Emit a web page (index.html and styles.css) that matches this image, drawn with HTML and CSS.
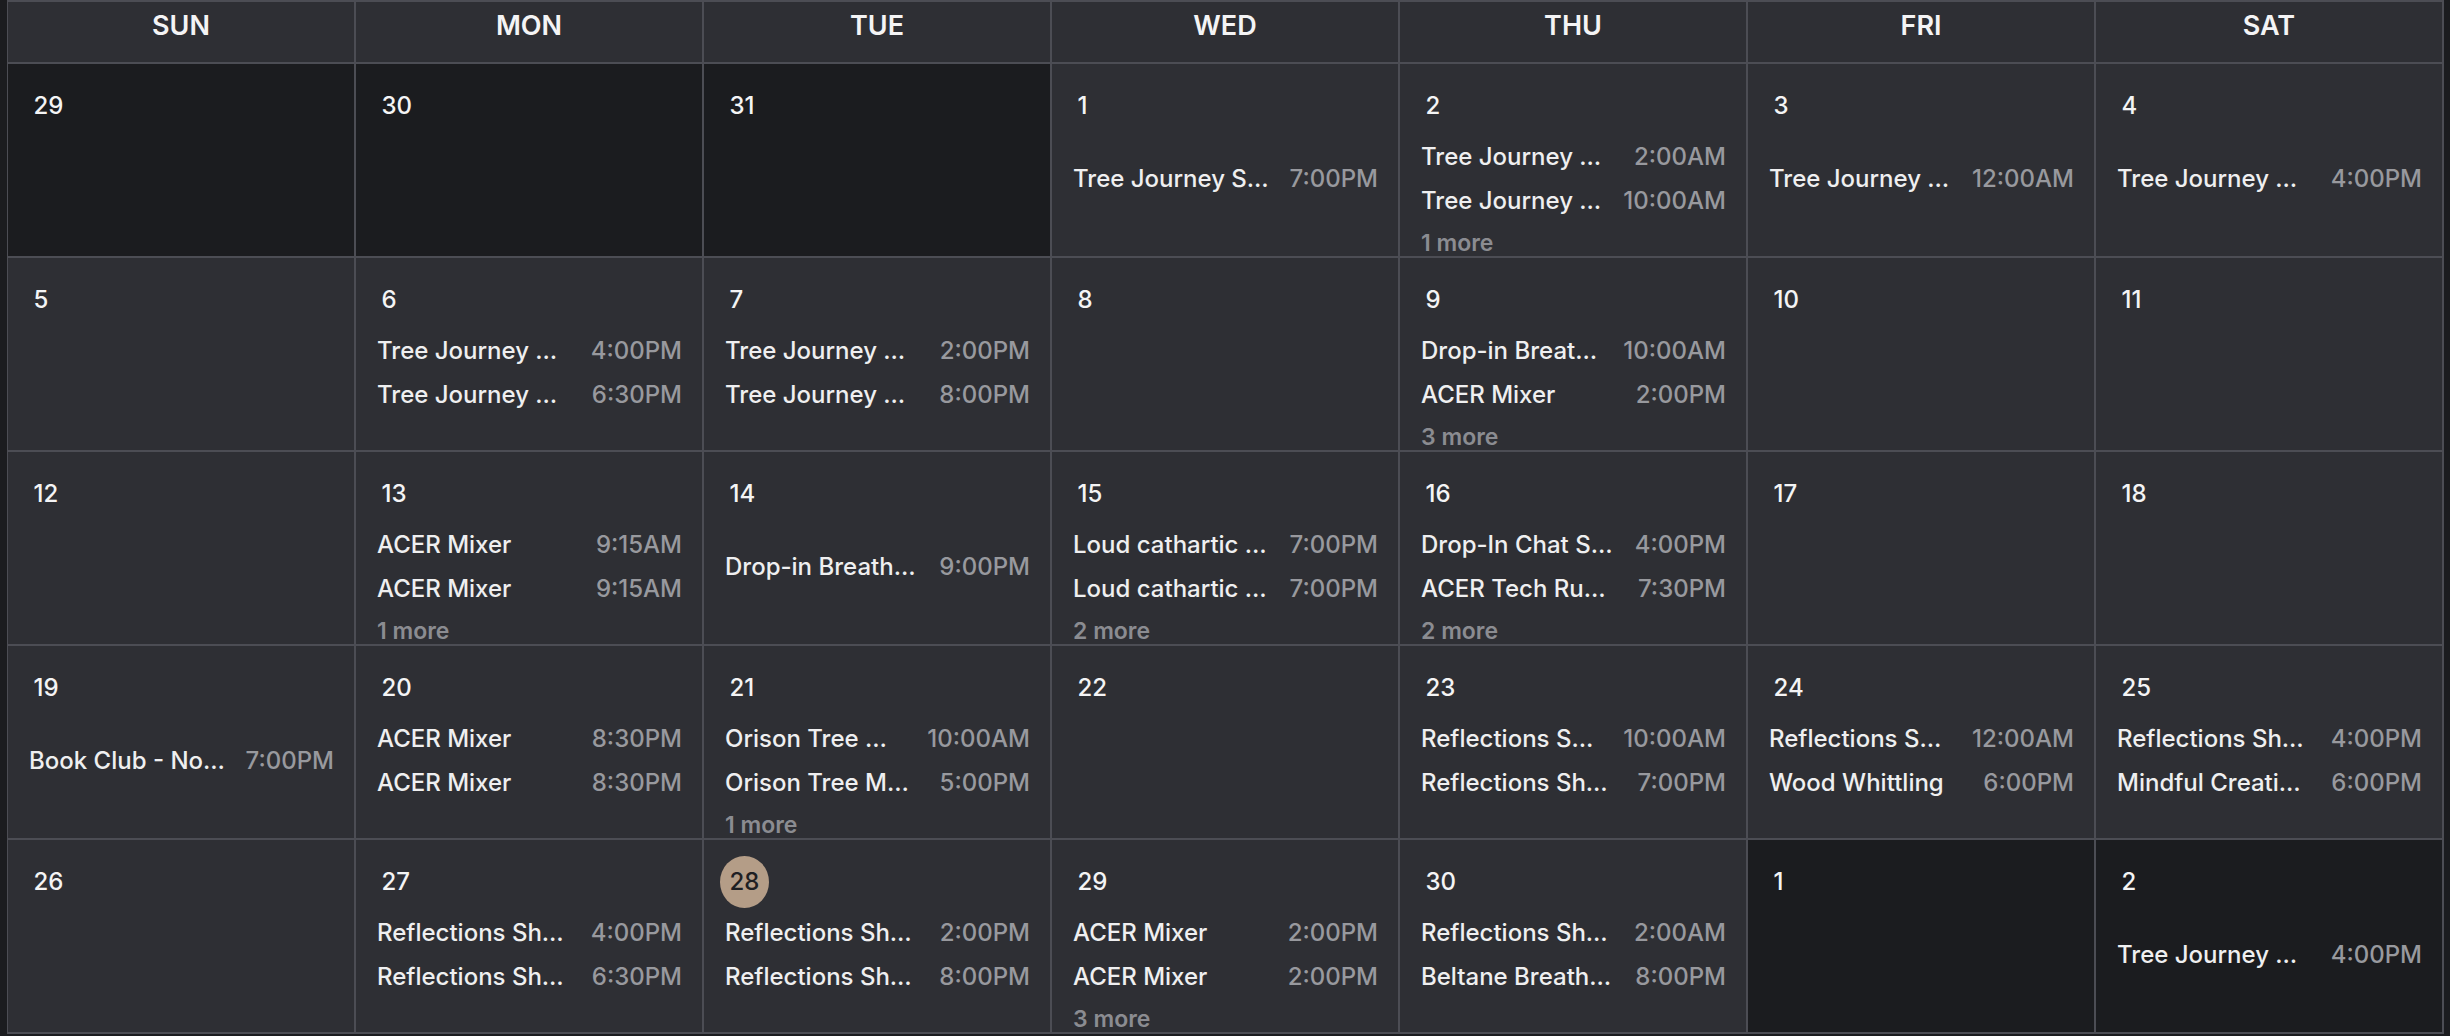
FILE: index.html
```html
<!DOCTYPE html>
<html lang="en">
<head>
<meta charset="utf-8">
<title>Calendar</title>
<link rel="stylesheet" href="styles.css">
</head>
<body>
<div class="calendar">
  <div class="dow">SUN</div>
  <div class="dow">MON</div>
  <div class="dow">TUE</div>
  <div class="dow">WED</div>
  <div class="dow">THU</div>
  <div class="dow">FRI</div>
  <div class="dow">SAT</div>

  <!-- week 1 -->
  <div class="day out"><span class="num">29</span><div class="events"></div><div class="more"></div></div>
  <div class="day out"><span class="num">30</span><div class="events"></div><div class="more"></div></div>
  <div class="day out"><span class="num">31</span><div class="events"></div><div class="more"></div></div>
  <div class="day"><span class="num">1</span>
    <div class="events">
      <div class="event"><span class="name">Tree Journey S…</span><span class="time">7:00PM</span></div>
    </div><div class="more"></div></div>
  <div class="day"><span class="num">2</span>
    <div class="events">
      <div class="event"><span class="name">Tree Journey …</span><span class="time">2:00AM</span></div>
      <div class="event"><span class="name">Tree Journey …</span><span class="time">10:00AM</span></div>
    </div><div class="more">1 more</div></div>
  <div class="day"><span class="num">3</span>
    <div class="events">
      <div class="event"><span class="name">Tree Journey …</span><span class="time">12:00AM</span></div>
    </div><div class="more"></div></div>
  <div class="day"><span class="num">4</span>
    <div class="events">
      <div class="event"><span class="name">Tree Journey …</span><span class="time">4:00PM</span></div>
    </div><div class="more"></div></div>

  <!-- week 2 -->
  <div class="day"><span class="num">5</span><div class="events"></div><div class="more"></div></div>
  <div class="day"><span class="num">6</span>
    <div class="events">
      <div class="event"><span class="name">Tree Journey …</span><span class="time">4:00PM</span></div>
      <div class="event"><span class="name">Tree Journey …</span><span class="time">6:30PM</span></div>
    </div><div class="more"></div></div>
  <div class="day"><span class="num">7</span>
    <div class="events">
      <div class="event"><span class="name">Tree Journey …</span><span class="time">2:00PM</span></div>
      <div class="event"><span class="name">Tree Journey …</span><span class="time">8:00PM</span></div>
    </div><div class="more"></div></div>
  <div class="day"><span class="num">8</span><div class="events"></div><div class="more"></div></div>
  <div class="day"><span class="num">9</span>
    <div class="events">
      <div class="event"><span class="name">Drop-in Breat…</span><span class="time">10:00AM</span></div>
      <div class="event"><span class="name">ACER Mixer</span><span class="time">2:00PM</span></div>
    </div><div class="more">3 more</div></div>
  <div class="day"><span class="num">10</span><div class="events"></div><div class="more"></div></div>
  <div class="day"><span class="num">11</span><div class="events"></div><div class="more"></div></div>

  <!-- week 3 -->
  <div class="day"><span class="num">12</span><div class="events"></div><div class="more"></div></div>
  <div class="day"><span class="num">13</span>
    <div class="events">
      <div class="event"><span class="name">ACER Mixer</span><span class="time">9:15AM</span></div>
      <div class="event"><span class="name">ACER Mixer</span><span class="time">9:15AM</span></div>
    </div><div class="more">1 more</div></div>
  <div class="day"><span class="num">14</span>
    <div class="events">
      <div class="event"><span class="name">Drop-in Breath…</span><span class="time">9:00PM</span></div>
    </div><div class="more"></div></div>
  <div class="day"><span class="num">15</span>
    <div class="events">
      <div class="event"><span class="name">Loud cathartic …</span><span class="time">7:00PM</span></div>
      <div class="event"><span class="name">Loud cathartic …</span><span class="time">7:00PM</span></div>
    </div><div class="more">2 more</div></div>
  <div class="day"><span class="num">16</span>
    <div class="events">
      <div class="event"><span class="name">Drop-In Chat S…</span><span class="time">4:00PM</span></div>
      <div class="event"><span class="name">ACER Tech Ru…</span><span class="time">7:30PM</span></div>
    </div><div class="more">2 more</div></div>
  <div class="day"><span class="num">17</span><div class="events"></div><div class="more"></div></div>
  <div class="day"><span class="num">18</span><div class="events"></div><div class="more"></div></div>

  <!-- week 4 -->
  <div class="day"><span class="num">19</span>
    <div class="events">
      <div class="event"><span class="name">Book Club - No…</span><span class="time">7:00PM</span></div>
    </div><div class="more"></div></div>
  <div class="day"><span class="num">20</span>
    <div class="events">
      <div class="event"><span class="name">ACER Mixer</span><span class="time">8:30PM</span></div>
      <div class="event"><span class="name">ACER Mixer</span><span class="time">8:30PM</span></div>
    </div><div class="more"></div></div>
  <div class="day"><span class="num">21</span>
    <div class="events">
      <div class="event"><span class="name">Orison Tree …</span><span class="time">10:00AM</span></div>
      <div class="event"><span class="name">Orison Tree M…</span><span class="time">5:00PM</span></div>
    </div><div class="more">1 more</div></div>
  <div class="day"><span class="num">22</span><div class="events"></div><div class="more"></div></div>
  <div class="day"><span class="num">23</span>
    <div class="events">
      <div class="event"><span class="name">Reflections S…</span><span class="time">10:00AM</span></div>
      <div class="event"><span class="name">Reflections Sh…</span><span class="time">7:00PM</span></div>
    </div><div class="more"></div></div>
  <div class="day"><span class="num">24</span>
    <div class="events">
      <div class="event"><span class="name">Reflections S…</span><span class="time">12:00AM</span></div>
      <div class="event"><span class="name">Wood Whittling</span><span class="time">6:00PM</span></div>
    </div><div class="more"></div></div>
  <div class="day"><span class="num">25</span>
    <div class="events">
      <div class="event"><span class="name">Reflections Sh…</span><span class="time">4:00PM</span></div>
      <div class="event"><span class="name">Mindful Creati…</span><span class="time">6:00PM</span></div>
    </div><div class="more"></div></div>

  <!-- week 5 -->
  <div class="day"><span class="num">26</span><div class="events"></div><div class="more"></div></div>
  <div class="day"><span class="num">27</span>
    <div class="events">
      <div class="event"><span class="name">Reflections Sh…</span><span class="time">4:00PM</span></div>
      <div class="event"><span class="name">Reflections Sh…</span><span class="time">6:30PM</span></div>
    </div><div class="more"></div></div>
  <div class="day today"><span class="num">28</span>
    <div class="events">
      <div class="event"><span class="name">Reflections Sh…</span><span class="time">2:00PM</span></div>
      <div class="event"><span class="name">Reflections Sh…</span><span class="time">8:00PM</span></div>
    </div><div class="more"></div></div>
  <div class="day"><span class="num">29</span>
    <div class="events">
      <div class="event"><span class="name">ACER Mixer</span><span class="time">2:00PM</span></div>
      <div class="event"><span class="name">ACER Mixer</span><span class="time">2:00PM</span></div>
    </div><div class="more">3 more</div></div>
  <div class="day"><span class="num">30</span>
    <div class="events">
      <div class="event"><span class="name">Reflections Sh…</span><span class="time">2:00AM</span></div>
      <div class="event"><span class="name">Beltane Breath…</span><span class="time">8:00PM</span></div>
    </div><div class="more"></div></div>
  <div class="day out"><span class="num">1</span><div class="events"></div><div class="more"></div></div>
  <div class="day out"><span class="num">2</span>
    <div class="events">
      <div class="event"><span class="name">Tree Journey …</span><span class="time">4:00PM</span></div>
    </div><div class="more"></div></div>
</div>
</body>
</html>
```

FILE: styles.css
```css
html, body {
  margin: 0;
  padding: 0;
}

body {
  background: #1b1c1f;
  font-family: Inter, "Noto Sans", "Liberation Sans", sans-serif;
  color: #f1f1f2;
  overflow: hidden;
}

.calendar {
  margin-left: 7px;
  width: max-content;
  display: grid;
  grid-template-columns: repeat(7, 346px);
  grid-template-rows: 60px repeat(5, 192px);
  gap: 2px;
  padding: 2px 2px 2px 1px;
  background: #4c4d54;
}

.dow {
  background: #2e2f34;
  text-align: center;
  font-size: 27px;
  font-weight: 600;
  line-height: 33px;
  padding-top: 7px;
  box-sizing: border-box;
  color: #f4f4f5;
}

.day {
  background: #2e2f34;
  display: grid;
  grid-template-rows: 52px 94px 30px;
  padding: 16px 20px 0 16px;
  overflow: hidden;
  min-width: 0;
}

.day.out {
  background: #1b1c1f;
}

.num {
  justify-self: start;
  height: 52px;
  line-height: 52px;
  padding: 0 9.5px;
  border-radius: 50%;
  font-size: 24px;
  font-weight: 500;
  color: #f4f4f5;
}

.today .num {
  background: #b49d87;
  color: #1f2023;
}

.events {
  display: flex;
  flex-direction: column;
  justify-content: center;
  padding-left: 5px;
  min-width: 0;
}

.event {
  display: flex;
  align-items: center;
  gap: 10px;
  height: 44px;
  line-height: 44px;
  font-size: 24px;
  font-weight: 500;
  min-width: 0;
}

.name {
  flex: 1;
  min-width: 0;
  white-space: nowrap;
  overflow: hidden;
  text-overflow: ellipsis;
  color: #efeff0;
}

.time {
  flex-shrink: 0;
  color: #98999e;
}

.more {
  padding-left: 5px;
  font-size: 23px;
  font-weight: 600;
  line-height: 34px;
  color: #8b8c91;
}
```
